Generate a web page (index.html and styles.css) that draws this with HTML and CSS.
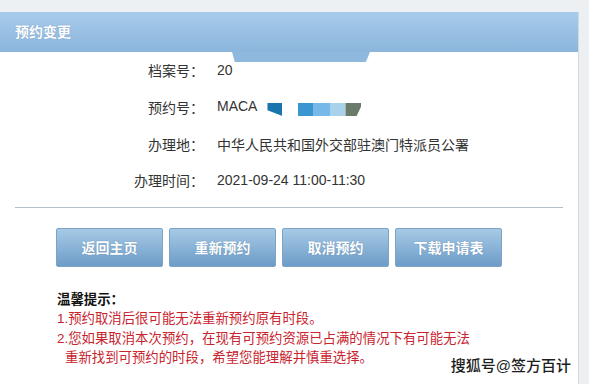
FILE: index.html
```html
<!DOCTYPE html>
<html lang="zh-CN">
  <head>
    <meta charset="UTF-8" />
    <meta name="viewport" content="width=device-width, initial-scale=1.0" />
    <title>预约变更</title>
    <link rel="stylesheet" href="styles.css">
  </head>
  <body>
    <div class="panel">
      <div class="panel-header">预约变更</div>

      <div class="info">
        <div class="row">
          <span class="label">档案号：</span>
          <span class="value">20</span>
        </div>
        <div class="row">
          <span class="label">预约号：</span>
          <span class="value">MACA<span class="mask">
            <i class="m1"></i><i class="m2"></i><i class="m3"></i><i class="m4"></i><i class="m5"></i>
          </span></span>
        </div>
        <div class="row">
          <span class="label">办理地：</span>
          <span class="value">中华人民共和国外交部驻澳门特派员公署</span>
        </div>
        <div class="row">
          <span class="label">办理时间：</span>
          <span class="value">2021-09-24 11:00-11:30</span>
        </div>
      </div>

      <div class="divider"></div>

      <div class="actions">
        <button class="btn">返回主页</button>
        <button class="btn">重新预约</button>
        <button class="btn">取消预约</button>
        <button class="btn">下载申请表</button>
      </div>

      <div class="tips">
        <div class="tips-title">温馨提示：</div>
        <p>1.预约取消后很可能无法重新预约原有时段。</p>
        <p>2.您如果取消本次预约，在现有可预约资源已占满的情况下有可能无法<br><span class="cont">重新找到可预约的时段，希望您能理解并慎重选择。</span></p>
      </div>

      <div class="watermark">搜狐号@签方百计</div>
    </div>
  </body>
</html>
```

FILE: styles.css
```css
body {
  margin: 0;
  padding-top: 12px;
  background-color: #edf0f2;
  font-family: "Liberation Sans", "Noto Sans CJK SC", sans-serif;
  color: #333;
}
.panel {
  position: relative;
  width: 578px;
  height: 372px;
  background-color: #fff;
  border-right: 1px solid #d3d9dd;
}
.panel-header {
  position: relative;
  height: 40px;
  line-height: 40px;
  padding-left: 15px;
  background: linear-gradient(#a7cceb, #8cb5dc);
  color: #fff;
  font-size: 14px;
  font-weight: bold;
  text-shadow: 0 0 1px rgba(60, 100, 140, 0.5);
}
/* blurred mark hanging below the header */
.panel-header::after {
  content: "";
  position: absolute;
  left: 232px;
  top: 40px;
  width: 138px;
  height: 10px;
  background: #8fb8de;
  clip-path: polygon(0 0, 100% 0, 97% 100%, 2% 100%);
}
.info {
  font-size: 14px;
}
.row {
  display: flex;
  align-items: center;
  height: 36.7px;
}
.label {
  width: 204px;
  text-align: right;
}
.value {
  margin-left: 13px;
}
.mask {
  display: inline-flex;
  margin-left: 10px;
  vertical-align: -5px;
}
.mask i {
  display: block;
  height: 13px;
}
.m1 {
  width: 15px;
  margin-right: 16px;
  background: #1a75ad;
  clip-path: polygon(0 0, 100% 0, 100% 100%, 0 55%);
}
.m2 {
  width: 15px;
  background: #3b95cf;
}
.m3 {
  width: 17px;
  background: #78b8e8;
}
.m4 {
  width: 15px;
  background: #a8d2ec;
}
.m5 {
  width: 16px;
  background: #6b7b6b;
  clip-path: polygon(0 0, 100% 0, 100% 20%, 70% 100%, 0 100%);
}
.divider {
  margin: 8px 15px 0;
  height: 1px;
  background-color: #b3bec6;
}
.actions {
  display: flex;
  gap: 6px;
  margin-top: 20px;
  padding-left: 56px;
}
.btn {
  width: 107px;
  height: 39px;
  padding: 0;
  border: 1px solid #7ca2c5;
  border-radius: 2px;
  background: linear-gradient(#a6cae6, #6d9cc8);
  color: #fff;
  font-family: inherit;
  font-size: 14px;
  font-weight: bold;
  text-shadow: 0 0 1px rgba(50, 90, 130, 0.6);
  cursor: pointer;
}
.tips {
  margin-top: 23px;
  padding-left: 57px;
  font-size: 13.4px;
  line-height: 19.5px;
}
.tips-title {
  color: #111;
  font-weight: bold;
}
.tips p {
  margin: 0;
  color: #c8242e;
}
.cont {
  margin-left: 8px;
}
.watermark {
  position: absolute;
  right: 7px;
  bottom: 9px;
  font-size: 15px;
  font-weight: 500;
  color: #1d1d1d;
  text-shadow: 0 0 2px #fff, 0 0 2px #fff;
}
```
